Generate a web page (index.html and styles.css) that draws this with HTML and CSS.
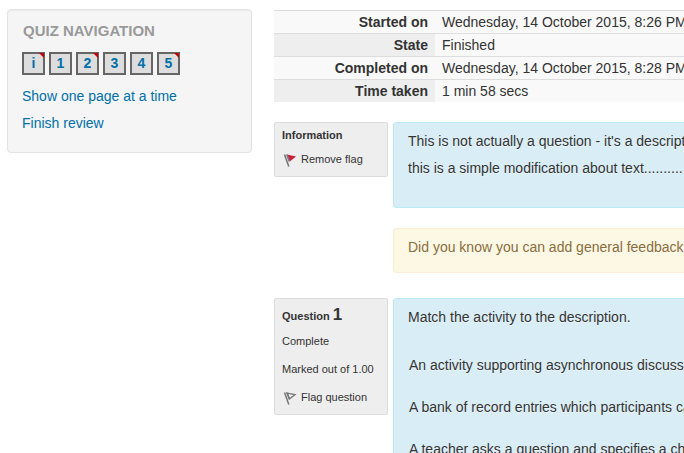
FILE: index.html
```
<!DOCTYPE html>
<html lang="en">
<head>
    <meta charset="UTF-8">
    <meta name="viewport" content="width=device-width, initial-scale=1.0">
    <title>Quiz review</title>
    <link rel="stylesheet" href="styles.css">
</head>
<body>
    <div class="page">
        <aside class="block">
            <h2>QUIZ NAVIGATION</h2>
            <nav class="quiz-buttons">
                <a href="#info" class="quiz-button flagged">i</a>
                <a href="#q1" class="quiz-button">1</a>
                <a href="#q2" class="quiz-button flagged">2</a>
                <a href="#q3" class="quiz-button">3</a>
                <a href="#q4" class="quiz-button">4</a>
                <a href="#q5" class="quiz-button flagged">5</a>
            </nav>
            <a href="#page" class="other-link">Show one page at a time</a>
            <a href="#finish" class="other-link">Finish review</a>
        </aside>

        <main class="region-main">
            <table class="summary">
                <tbody>
                    <tr>
                        <th scope="row">Started on</th>
                        <td>Wednesday, 14 October 2015, 8:26 PM</td>
                    </tr>
                    <tr>
                        <th scope="row">State</th>
                        <td>Finished</td>
                    </tr>
                    <tr>
                        <th scope="row">Completed on</th>
                        <td>Wednesday, 14 October 2015, 8:28 PM</td>
                    </tr>
                    <tr>
                        <th scope="row">Time taken</th>
                        <td>1 min 58 secs</td>
                    </tr>
                </tbody>
            </table>

            <section class="question" id="info">
                <div class="info">
                    <h3>Information</h3>
                    <button type="button" class="flag">
                        <svg width="16" height="16" viewBox="0 0 16 16" aria-hidden="true">
                            <path d="M5 3.5l9 2-6.2 5z" fill="#cc1f3c"/>
                            <path d="M2.5 3.5l4.3 12M4.8 3.5l2.6 7" fill="none" stroke="#777" stroke-width="1.6"/>
                        </svg>
                        Remove flag
                    </button>
                </div>
                <div class="content">
                    <div class="formulation">
                        <p>This is not actually a question - it's a description.</p>
                        <p>this is a simple modification about text.................</p>
                    </div>
                    <div class="feedback">Did you know you can add general feedback?</div>
                </div>
            </section>

            <section class="question" id="q1">
                <div class="info">
                    <h3 class="numbered">Question <span class="number">1</span></h3>
                    <div class="state">Complete</div>
                    <div class="grade">Marked out of 1.00</div>
                    <button type="button" class="flag">
                        <svg width="16" height="16" viewBox="0 0 16 16" aria-hidden="true">
                            <path d="M5.2 4.2l7.8 1.4-5.2 4.2z" fill="#f4f4f4" stroke="#777" stroke-width="1.3"/>
                            <path d="M2.5 3.5l4.3 12M4.8 3.5l2.6 7" fill="none" stroke="#777" stroke-width="1.5"/>
                        </svg>
                        Flag question
                    </button>
                </div>
                <div class="content">
                    <div class="formulation">
                        <p>Match the activity to the description.</p>
                        <table class="answer">
                            <tbody>
                                <tr><td>An activity supporting asynchronous discussions.</td></tr>
                                <tr><td>A bank of record entries which participants can add to.</td></tr>
                                <tr><td>A teacher asks a question and specifies a choice of responses.</td></tr>
                            </tbody>
                        </table>
                    </div>
                </div>
            </section>
        </main>
    </div>
</body>
</html>
```

FILE: styles.css
```
* {
    box-sizing: border-box;
}

body {
    height: 100vh;
    margin: 0;
    overflow: hidden;
    background-color: #fff;
    color: #333;
    font-family: "Liberation Sans", Arial, sans-serif;
    font-size: 14px;
    line-height: 20px;
}

a {
    color: #0070a8;
    text-decoration: none;
}

.page {
    display: flex;
    align-items: flex-start;
    gap: 22px;
    padding: 9px 0 0 7px;
}

/* Navigation block */
.block {
    flex: 0 0 245px;
    padding: 11px 14px 12px;
    background-color: #f5f5f5;
    border: 1px solid #e3e3e3;
    border-radius: 4px;
    box-shadow: inset 0 1px 1px rgba(0, 0, 0, 0.05);
}

.block h2 {
    margin: 0 0 11px 1px;
    color: #999;
    font-size: 15px;
    line-height: 20px;
}

.quiz-buttons {
    display: flex;
    gap: 4px;
    margin-bottom: 11px;
}

.quiz-button {
    position: relative;
    width: 23px;
    height: 23px;
    border: 2px solid #666;
    background-color: #ddd;
    font-weight: bold;
    line-height: 19px;
    text-align: center;
}

.flagged::after {
    content: "";
    position: absolute;
    top: -1px;
    right: -1px;
    border-top: 5px solid #c00000;
    border-left: 5px solid transparent;
}

.other-link {
    display: block;
    margin-bottom: 7px;
}

.region-main {
    flex: 1;
    min-width: 0;
    padding-top: 1px;
    white-space: nowrap;
}

/* Attempt summary */
.summary {
    width: 100%;
    margin-bottom: 20px;
    border-collapse: collapse;
    table-layout: fixed;
}

.summary th,
.summary td {
    padding: 1px 7px;
    border-top: 1px solid #ddd;
    background-color: #f9f9f9;
}

.summary th {
    width: 161px;
    text-align: right;
}

.summary tr:nth-child(even) th {
    background-color: #eee;
}

/* Questions */
.question {
    display: flex;
    align-items: flex-start;
    gap: 5px;
    margin-bottom: 25px;
}

.info {
    flex: 0 0 114px;
    padding: 2px 7px 7px;
    background-color: #eee;
    border: 1px solid #dcdcdc;
    border-radius: 2px;
    font-size: 11px;
}

.info h3 {
    margin: 0;
    font-size: 11px;
    line-height: 20px;
}

.info .numbered {
    padding-top: 4px;
    margin-bottom: 5px;
}

.number {
    font-size: 17px;
}

.state,
.grade {
    margin-bottom: 8px;
}

.flag {
    display: flex;
    align-items: center;
    gap: 3px;
    margin-top: 4px;
    padding: 0;
    border: 0;
    background: none;
    color: #333;
    font: inherit;
}

.grade + .flag {
    margin-top: 0;
}

.content {
    flex: 1;
    min-width: 0;
}

.formulation,
.feedback {
    overflow: hidden;
    border: 1px solid #bce8f1;
    border-right: 0;
    border-radius: 4px 0 0 4px;
    text-shadow: 0 1px 0 rgba(255, 255, 255, 0.5);
}

.formulation {
    padding: 8px 14px 29px;
    background-color: #d9edf7;
}

.formulation p {
    margin: 0 0 7px;
}

.formulation p:last-child {
    margin-bottom: 0;
}

.feedback {
    margin-top: 20px;
    padding: 8px 14px 15px;
    background-color: #fcf8e3;
    border-color: #fbeed5;
    color: #8a6d3b;
}

.answer {
    margin-top: 17px;
    border-spacing: 0;
}

.answer td {
    padding: 11px 1px;
}
```
